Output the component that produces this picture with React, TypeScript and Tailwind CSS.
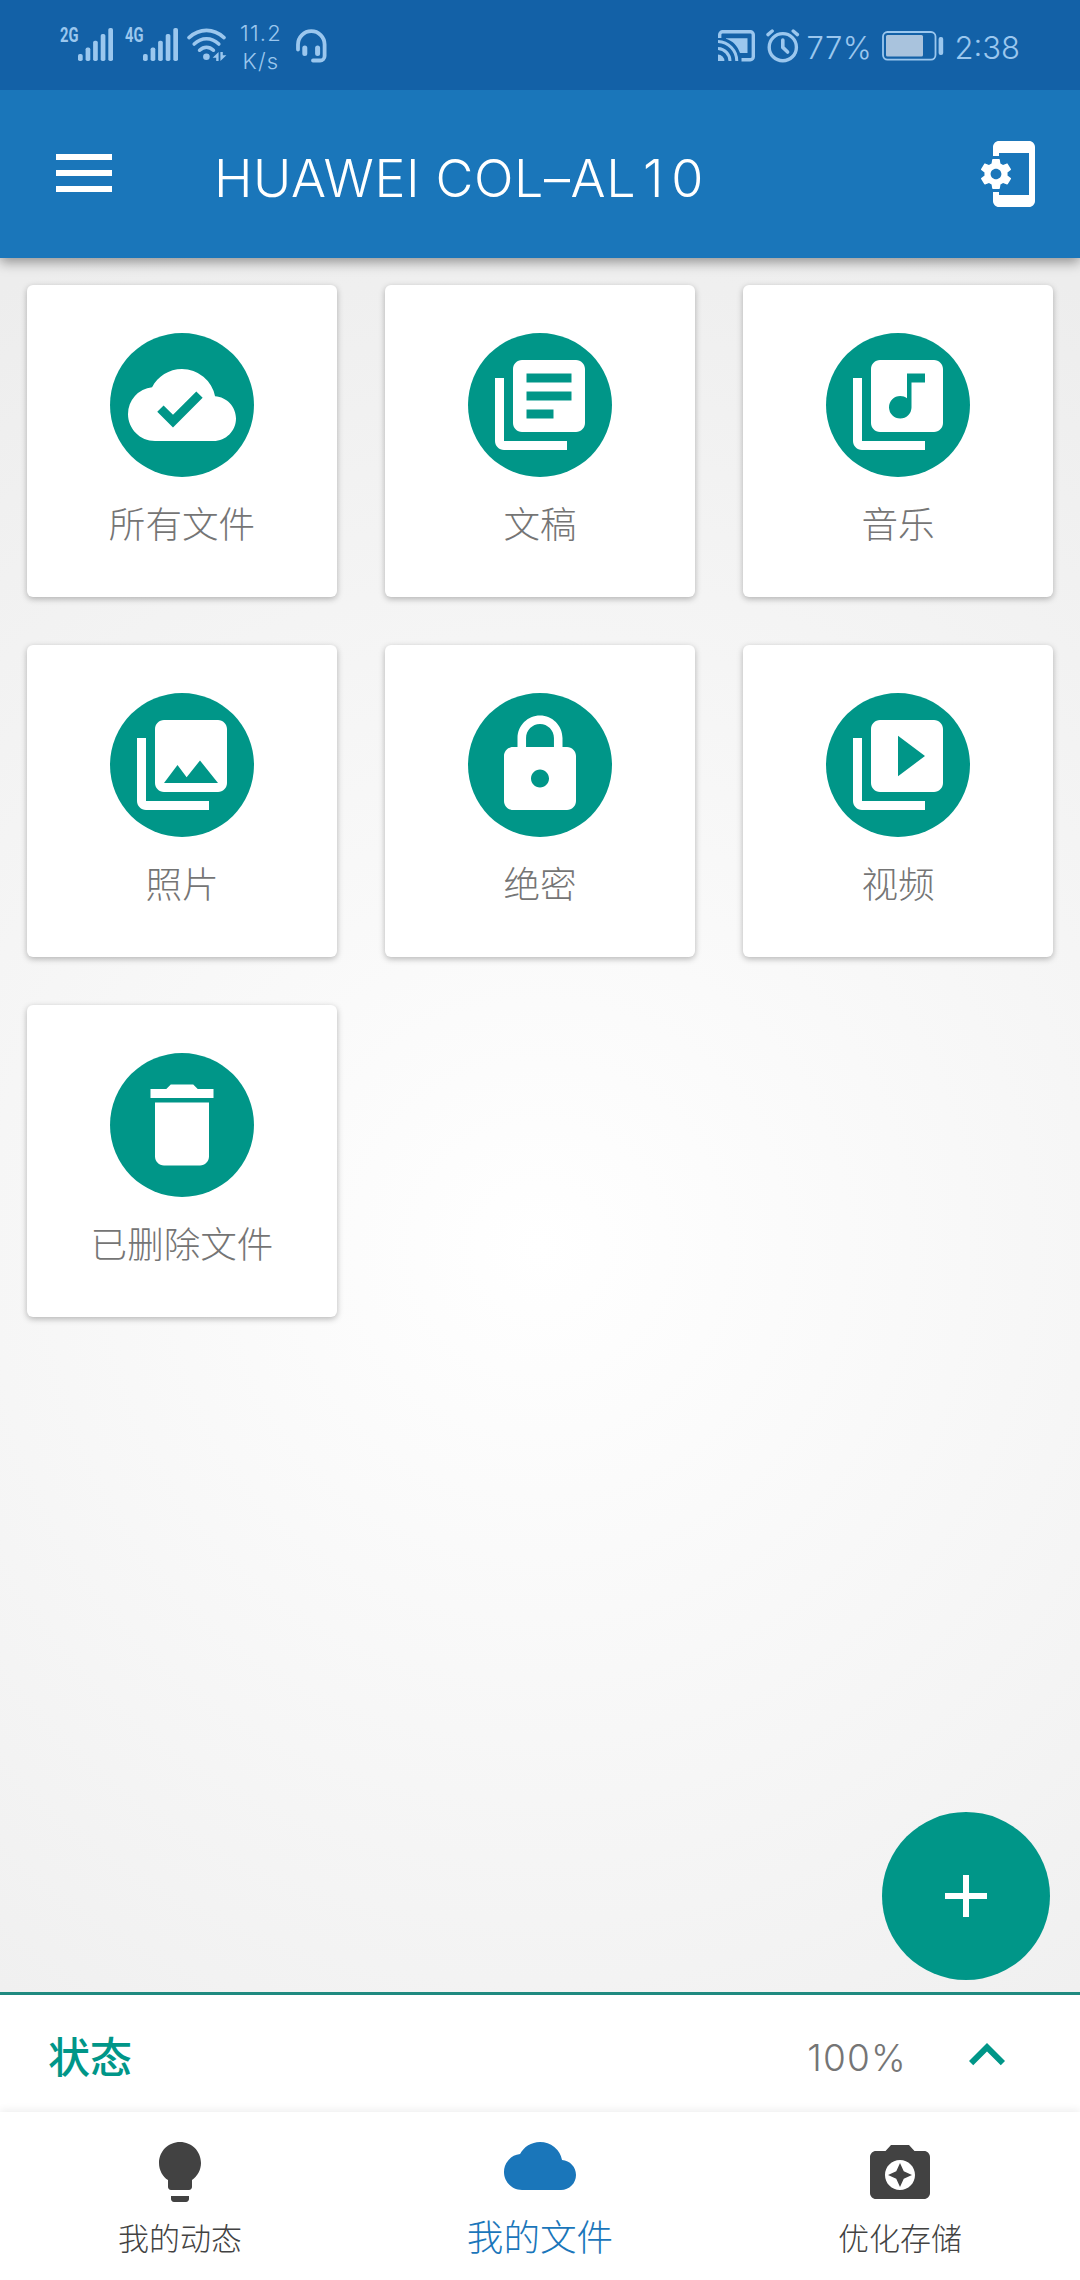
import React from 'react';
import type { IconType } from 'react-icons';
import {
  MdAdd,
  MdCameraEnhance,
  MdCloud,
  MdCloudDone,
  MdDelete,
  MdExpandLess,
  MdLibraryBooks,
  MdLibraryMusic,
  MdLock,
  MdPhonelinkSetup,
  MdPhotoLibrary,
  MdVideoLibrary,
} from 'react-icons/md';

interface Category {
  label: string;
  icon: IconType;
}

const categories: Category[] = [
  { label: '所有文件', icon: MdCloudDone },
  { label: '文稿', icon: MdLibraryBooks },
  { label: '音乐', icon: MdLibraryMusic },
  { label: '照片', icon: MdPhotoLibrary },
  { label: '绝密', icon: MdLock },
  { label: '视频', icon: MdVideoLibrary },
  { label: '已删除文件', icon: MdDelete },
];

const SignalBars: React.FC<{ network: string }> = ({ network }) => (
  <div className="flex h-[33px] items-start">
    <span className="w-[18px] origin-left scale-x-[0.7] whitespace-nowrap font-['Roboto'] text-[21px] font-bold leading-[15px]">
      {network}
    </span>
    <svg width="35" height="33" viewBox="0 0 35 33" fill="currentColor">
      <rect x="0" y="26" width="4.7" height="7" rx="1.8" />
      <rect x="7.6" y="19.4" width="4.7" height="13.6" rx="1.8" />
      <rect x="15.1" y="12.8" width="4.7" height="20.2" rx="1.8" />
      <rect x="22.7" y="6" width="4.7" height="27" rx="1.8" />
      <rect x="30.3" y="0" width="4.7" height="33" rx="1.8" />
    </svg>
  </div>
);

const WifiIcon: React.FC = () => (
  <svg width="40" height="34" viewBox="0 0 40 34" fill="none" stroke="currentColor" strokeWidth="3.6" strokeLinecap="round">
    <path d="M2 9.6Q10 2.4 19.5 2.4T37 9.6" />
    <path d="M7.2 16Q12.8 10.8 19.5 10.8T31.8 16" />
    <path d="M12.6 22.2Q15.8 19.2 19.5 19.2T26.4 22.2" />
    <circle cx="19.4" cy="28.8" r="3.3" fill="currentColor" stroke="none" />
    <path d="M31.6 24v9h-2.4v-3.2h-3.6zM33.4 33v-9h2.4v3.2h3.6z" fill="currentColor" stroke="none" />
  </svg>
);

const HeadsetIcon: React.FC = () => (
  <svg width="31" height="34" viewBox="0 0 31 34" fill="none" stroke="currentColor" strokeLinecap="round">
    <path d="M2 20.5V15.5a13.3 13.3 0 0 1 26.6 0V27a4.5 4.5 0 0 1-4.5 4.5H17" strokeWidth="3.8" />
    <path d="M8.8 19v5.5M21.6 19v5.5" strokeWidth="5" />
  </svg>
);

const CastIcon: React.FC = () => (
  <svg width="38" height="32" viewBox="0 0 38 32" fill="none" stroke="currentColor" strokeWidth="3.4">
    <path d="M1.7 8V4.7a3 3 0 0 1 3-3h27.6a3 3 0 0 1 3 3v22a3 3 0 0 1-3 3H23.5" />
    <path d="M8 8.3h21.5V23H22C19.5 16 15 11 8 8.8z" fill="currentColor" stroke="none" />
    <path d="M0 11.5A19.5 19.5 0 0 1 18.8 31M0 18.5A12.6 12.6 0 0 1 12 31" strokeWidth="3" />
    <path d="M0 24.6A6.4 6.4 0 0 1 6.4 31H0z" fill="currentColor" stroke="none" />
  </svg>
);

const AlarmIcon: React.FC = () => (
  <svg width="34" height="34" viewBox="0 0 34 34" fill="none" stroke="currentColor" strokeWidth="3.4" strokeLinecap="round" strokeLinejoin="round">
    <circle cx="16.8" cy="18.2" r="13.6" />
    <path d="M16.8 11v7.4l4.8 4.6" strokeWidth="3.6" />
    <path d="M2 5.6L6.2 2M31.4 5.6L27.2 2" />
  </svg>
);

const BatteryIcon: React.FC = () => (
  <svg width="62" height="30" viewBox="0 0 62 30" fill="none">
    <rect x="1" y="1" width="52.5" height="27.6" rx="4.5" stroke="currentColor" strokeWidth="1.8" />
    <rect x="4" y="4" width="37" height="21.4" rx="1.5" fill="#a9c3dd" />
    <rect x="56.6" y="6" width="4.6" height="18" rx="2" fill="currentColor" />
  </svg>
);

const BulbIcon: React.FC<{ className?: string }> = ({ className }) => (
  <svg viewBox="0 0 24 24" className={className} fill="currentColor">
    <path d="M9 21c0 .5.4 1 1 1h4c.6 0 1-.5 1-1v-1H9v1zm3-19C8.1 2 5 5.1 5 9c0 2.4 1.2 4.5 3 5.7V17c0 .5.4 1 1 1h6c.6 0 1-.5 1-1v-2.3c1.8-1.3 3-3.4 3-5.7 0-3.9-3.1-7-7-7z" />
  </svg>
);

const StatusBar: React.FC = () => (
  <div className="relative z-20 flex h-[90px] items-start justify-between bg-[#1361a7] pl-[60px] pr-[60px] pt-7 text-[#9bc7ee]">
    <div className="flex items-start">
      <SignalBars network="2G" />
      <div className="ml-3">
        <SignalBars network="4G" />
      </div>
      <div className="ml-[9px]">
        <WifiIcon />
      </div>
      <div className="-mt-[9px] ml-[7px] w-[54px] text-center font-['Inter'] text-[22px] font-light leading-7 tracking-[1.2px]">
        <div>11.2</div>
        <div>K/s</div>
      </div>
      <div className="ml-2 mt-px">
        <HeadsetIcon />
      </div>
    </div>
    <div className="flex items-start font-['Inter'] text-[31px] font-light leading-10">
      <div className="mt-0.5">
        <CastIcon />
      </div>
      <div className="ml-2.5 mt-px">
        <AlarmIcon />
      </div>
      <span className="ml-1.5 w-[70px] whitespace-nowrap tracking-[0.5px]">77%</span>
      <div className="ml-1.5 mt-[3px]">
        <BatteryIcon />
      </div>
      <span className="ml-2.5 whitespace-nowrap">2:38</span>
    </div>
  </div>
);

const AppBar: React.FC = () => (
  <header className="relative z-10 flex h-[168px] items-center bg-[#1a76ba] pl-14 pr-[33px] text-white shadow-[0_4px_12px_rgba(0,0,0,0.4)]">
    <button className="-mt-0.5 flex w-14 flex-col gap-2.5">
      <span className="h-1.5 bg-white" />
      <span className="h-1.5 bg-white" />
      <span className="h-1.5 bg-white" />
    </button>
    <h1 className="ml-[102px] mt-2.5 flex-1 whitespace-nowrap font-['Inter'] text-[52px] font-light leading-none tracking-[0.6px]">
      HUAWEI COL–AL<span className="mx-[7px]">1</span>0
    </h1>
    <MdPhonelinkSetup className="size-[72px]" />
  </header>
);

const CategoryCard: React.FC<Category> = ({ label, icon: Icon }) => (
  <div className="flex h-[312px] flex-col items-center rounded-md bg-white pt-12 shadow-[0_2px_6px_rgba(0,0,0,0.28)]">
    <div className="flex size-36 items-center justify-center rounded-full bg-[#009688]">
      <Icon className="size-[108px] text-white" />
    </div>
    <span className="mt-[21px] text-[36.6px] font-light leading-[50px] text-[#757575]">{label}</span>
  </div>
);

const StatusRow: React.FC = () => (
  <div className="flex h-[120px] items-center border-t-[3px] border-[#1f8a80] bg-white pl-12 pr-[57px] pt-0.5">
    <span className="flex-1 text-[42px] font-medium leading-none text-[#009688]">状态</span>
    <span className="mt-1.5 font-['Inter'] text-[37px] font-light leading-none tracking-[1.2px] text-[#757575]">100%</span>
    <MdExpandLess className="ml-[44px] size-[72px] text-[#009688]" />
  </div>
);

const BottomNav: React.FC = () => (
  <nav className="grid h-[168px] grid-cols-3 bg-white text-[#424242] shadow-[0_-2px_8px_rgba(0,0,0,0.07)]">
    <div className="flex flex-col items-center pt-6">
      <BulbIcon className="size-[72px]" />
      <span className="mt-1.5 text-[31px] font-light leading-[46px]">我的动态</span>
    </div>
    <div className="flex flex-col items-center pt-[18px] text-[#1a76ba]">
      <MdCloud className="size-[72px]" />
      <span className="mt-[9px] text-[36.6px] font-light leading-[50px]">我的文件</span>
    </div>
    <div className="flex flex-col items-center pt-6">
      <MdCameraEnhance className="size-[72px]" />
      <span className="mt-1.5 text-[31px] font-light leading-[46px]">优化存储</span>
    </div>
  </nav>
);

const App: React.FC = () => {
  return (
    <div className="flex h-[2280px] w-[1080px] flex-col overflow-hidden font-['Noto_Sans_CJK_SC',sans-serif]">
      <StatusBar />
      <AppBar />

      {/* File categories */}
      <main className="relative flex-1 bg-[radial-gradient(circle_1100px_at_50%_990px,#ffffff,#ededed)] px-[27px] pt-[27px]">
        <div className="grid grid-cols-3 gap-12">
          {categories.map(category => (
            <CategoryCard key={category.label} {...category} />
          ))}
        </div>
        <button className="absolute bottom-3 right-[30px] flex size-[168px] items-center justify-center rounded-full bg-[#009688]">
          <MdAdd className="size-[72px] text-white" />
        </button>
      </main>

      <StatusRow />
      <BottomNav />
    </div>
  );
};

export default App;
